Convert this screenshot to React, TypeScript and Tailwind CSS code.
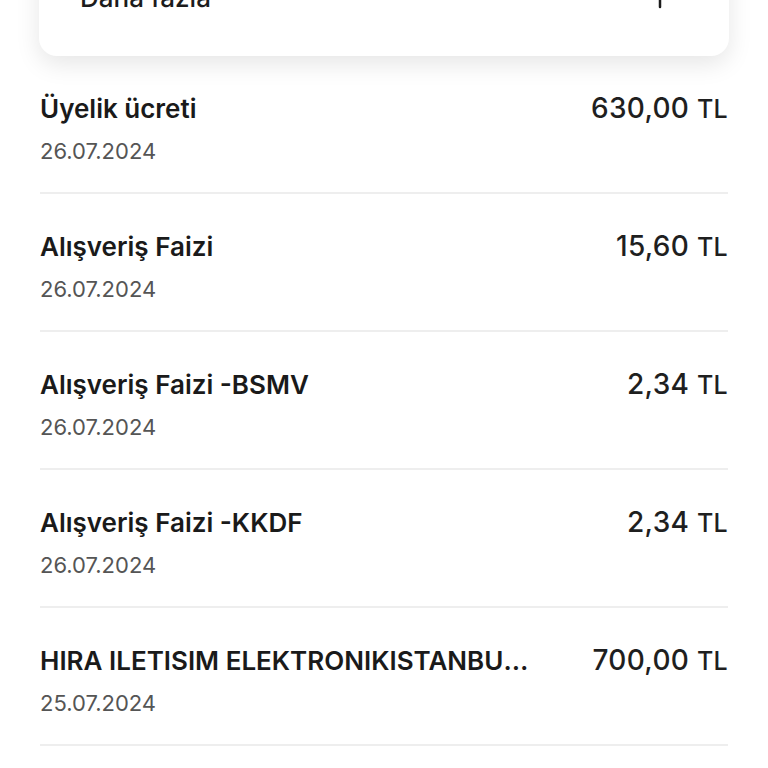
const rows = [
    { title: "Üyelik ücreti", date: "26.07.2024", amount: "630,00" },
    { title: "Alışveriş Faizi", date: "26.07.2024", amount: "15,60" },
    { title: "Alışveriş Faizi -BSMV", date: "26.07.2024", amount: "2,34" },
    { title: "Alışveriş Faizi -KKDF", date: "26.07.2024", amount: "2,34" },
    { title: "HIRA ILETISIM ELEKTRONIKISTANBUL TR", date: "25.07.2024", amount: "700,00" },
];

const App = () => {
    return (
        <div className="w-[768px] h-[768px] overflow-hidden bg-white font-['Inter',sans-serif]">
            {/* Expand card (cut off at top) */}
            <div className="px-[39px]">
                <div className="-mt-[44px] h-[100px] bg-white rounded-[18px] shadow-[0_8px_24px_rgba(0,0,0,0.10)] flex items-start justify-between pl-[41px] pr-[57px] pt-[27px]">
                    <span className="text-[26px] leading-[30px] font-medium text-[#1c1c1c]">Daha fazla</span>
                    <svg width="24" height="24" viewBox="0 0 24 24" className="mt-[2px]">
                        <path d="M12 2v20M2 12h20" stroke="#1c1c1c" strokeWidth="2.5" strokeLinecap="round" />
                    </svg>
                </div>
            </div>

            {/* Transactions */}
            <div className="px-[40px]">
                {rows.map((r, i) => (
                    <div key={i} className="pt-[36px] pb-[29px] border-b-2 border-[#eeeeee]">
                        <div className="flex items-center justify-between gap-[30px] h-[32px]">
                            <span className="truncate max-w-[494px] text-[26px] font-semibold text-[#1a1a1a]">{r.title}</span>
                            <span className="shrink-0 text-[28px] font-medium text-[#1f1f1f] tracking-[0.3px]">
                                {r.amount} <span className="text-[25px]">TL</span>
                            </span>
                        </div>
                        <div className="mt-[15px] h-[24px] leading-[24px] text-[22px] text-[#555555]">{r.date}</div>
                    </div>
                ))}
            </div>
        </div>
    );
};

export default App;
